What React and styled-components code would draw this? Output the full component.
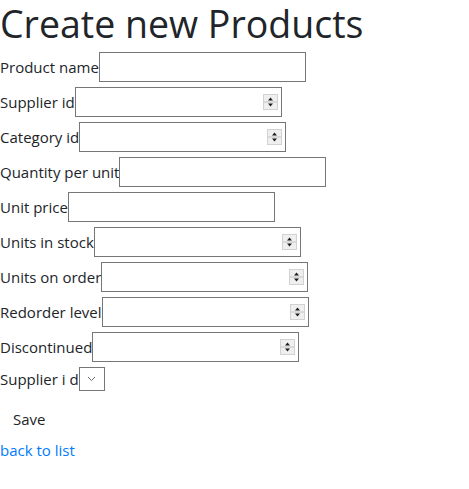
import styled, { createGlobalStyle } from 'styled-components';

const GlobalStyle = createGlobalStyle`
  body {
    margin: 0;
    font-family: "Open Sans", "Noto Sans", sans-serif;
    font-size: 15px;
    line-height: 24px;
    color: #212529;
    background: #ffffff;
  }
  input[type="number"]::-webkit-inner-spin-button,
  input[type="number"]::-webkit-outer-spin-button {
    -webkit-appearance: none;
    margin: 0;
  }
`;

const fields = [
  { label: 'Product name', type: 'text' },
  { label: 'Supplier id', type: 'number' },
  { label: 'Category id', type: 'number' },
  { label: 'Quantity per unit', type: 'text' },
  { label: 'Unit price', type: 'text' },
  { label: 'Units in stock', type: 'number' },
  { label: 'Units on order', type: 'number' },
  { label: 'Redorder level', type: 'number' },
  { label: 'Discontinued', type: 'number' },
];

export default function App() {
  return (
    <>
      <GlobalStyle />
      <Title>Create new Products</Title>
      <Form onSubmit={(e) => e.preventDefault()}>
        {fields.map((f) => (
          <Row key={f.label}>
            <Label>{f.label}</Label>
            {f.type === 'text' ? (
              <TextInput type="text" />
            ) : (
              <NumberBox>
                <BareInput type="number" />
                <Spinner />
              </NumberBox>
            )}
          </Row>
        ))}
        <Row>
          <Label>Supplier i d</Label>
          <SelectBox>
            <svg width="9" height="6" viewBox="0 0 9 6">
              <path d="M1 1 L4.5 4.5 L8 1" fill="none" stroke="#6b6b6b" strokeWidth="1" />
            </svg>
          </SelectBox>
        </Row>
        <SaveButton type="submit">Save</SaveButton>
      </Form>
      <BackLink href="#">back to list</BackLink>
    </>
  );
}

function Spinner() {
  return (
    <svg width="15" height="16" viewBox="0 0 15 16">
      <rect x="0.5" y="0.5" width="14" height="15" fill="#efefef" stroke="#d2d2d2" />
      <line x1="1" y1="8" x2="14" y2="8" stroke="#c4c4c4" />
      <path d="M7.5 3.5 L10 6.5 L5 6.5 Z" fill="#1e1e1e" />
      <path d="M5 9.5 L10 9.5 L7.5 12.5 Z" fill="#1e1e1e" />
    </svg>
  );
}

const Title = styled.h1`
  font-size: 37.5px;
  font-weight: 400;
  line-height: 48px;
  margin: 0 0 4px 0;
`;

const Form = styled.form`
  display: flex;
  flex-direction: column;
  align-items: flex-start;
  gap: 5px;
`;

const Row = styled.div`
  display: flex;
  align-items: center;
`;

const Label = styled.label`
  white-space: nowrap;
`;

const TextInput = styled.input`
  box-sizing: border-box;
  width: 207px;
  height: 30px;
  border: 1px solid #767676;
  padding: 1px 2px;
  font: inherit;
  outline: none;
`;

const NumberBox = styled.div`
  box-sizing: border-box;
  width: 207px;
  height: 30px;
  border: 1px solid #767676;
  display: flex;
  align-items: center;
  padding: 0 3px 0 2px;
`;

const BareInput = styled.input`
  flex: 1;
  min-width: 0;
  border: none;
  outline: none;
  background: transparent;
  font: inherit;
  -moz-appearance: textfield;
`;

const SelectBox = styled.div`
  box-sizing: border-box;
  width: 26px;
  height: 24px;
  border: 1px solid #767676;
  display: flex;
  align-items: center;
  justify-content: center;
`;

const SaveButton = styled.button`
  margin-top: 4px;
  padding: 6px 12px;
  border: 1px solid transparent;
  background: transparent;
  font: inherit;
  color: #212529;
`;

const BackLink = styled.a`
  display: block;
  color: #007bff;
  text-decoration: none;
`;
